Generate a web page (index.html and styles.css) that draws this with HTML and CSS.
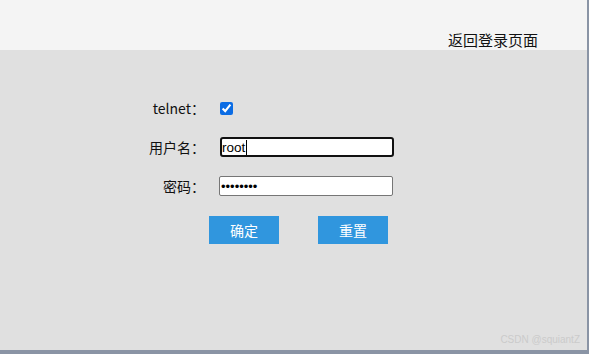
FILE: index.html
```html
<!DOCTYPE html>
<html lang="zh-CN">
<head>
<meta charset="utf-8">
<title>telnet</title>
<link rel="stylesheet" href="styles.css">
</head>
<body>
<div class="page">
  <header class="topbar">
    <a class="back-link" href="#">返回登录页面</a>
  </header>
  <main class="content">
    <form class="login-form">
      <div class="row">
        <label class="label" for="telnet">telnet：</label>
        <div class="control"><input id="telnet" class="check" type="checkbox" checked></div>
      </div>
      <div class="row">
        <label class="label" for="user">用户名：</label>
        <div class="control field-wrap">
          <input id="user" class="field field-focused" type="text" value="root">
          <span class="caret"></span>
        </div>
      </div>
      <div class="row">
        <label class="label" for="pwd">密码：</label>
        <div class="control"><input id="pwd" class="field field-pwd" type="password" value="12345678"></div>
      </div>
      <div class="buttons">
        <button type="button" class="btn">确定</button>
        <button type="reset" class="btn">重置</button>
      </div>
    </form>
    <div class="watermark">CSDN @squiantZ</div>
  </main>
</div>
</body>
</html>
```
FILE: styles.css
```css
html, body {
  margin: 0;
  padding: 0;
}
body {
  background: #8a94a5;
  width: 589px;
  height: 354px;
  overflow: hidden;
  font-family: "Noto Sans CJK SC", "Noto Sans", sans-serif;
  font-size: 14px;
  color: #111;
}
.page {
  width: 587px;
  height: 350px;
  display: flex;
  flex-direction: column;
}
.topbar {
  height: 50px;
  background: #f4f4f4;
  display: flex;
  justify-content: flex-end;
  align-items: flex-end;
  padding-right: 49px;
  box-sizing: border-box;
}
.back-link {
  color: #111;
  text-decoration: none;
  font-size: 15px;
  line-height: 20px;
}
.content {
  flex: 1;
  background: #e0e0e0;
  position: relative;
  padding-top: 48px;
  box-sizing: border-box;
}
.login-form {
  display: flex;
  flex-direction: column;
  gap: 19px;
}
.row {
  display: flex;
  align-items: center;
  height: 20px;
}
.label {
  width: 205px;
  text-align: right;
  line-height: 20px;
  color: #111;
}
.control {
  margin-left: 14px;
  display: flex;
  align-items: center;
}
.check {
  width: 13px;
  height: 13px;
  margin: 0 0 0 1px;
  accent-color: #0b6ce4;
}
.field-wrap {
  position: relative;
}
.field {
  width: 174px;
  height: 20px;
  box-sizing: border-box;
  border: 1px solid #767676;
  border-radius: 2px;
  background: #fff;
  padding: 0 1px;
  margin: 0;
  font-family: "Liberation Sans", Arial, sans-serif;
  font-size: 13.5px;
  color: #000;
  outline: none;
}
.field-focused {
  margin-left: 1px;
  width: 174px;
  border: 2px solid #111;
  border-radius: 3px;
  padding: 0;
}
.caret {
  position: absolute;
  left: 27px;
  top: 3px;
  width: 1px;
  height: 15px;
  background: #000;
}
.field-pwd {
  font-size: 13px;
}
.buttons {
  display: flex;
  gap: 39px;
  padding-left: 209px;
  margin-top: 1px;
}
.btn {
  width: 70px;
  height: 28px;
  border: none;
  background: #3096de;
  color: #fff;
  font-family: "Noto Sans CJK SC", sans-serif;
  font-size: 14px;
  padding: 0;
  margin: 0;
}
.watermark {
  position: absolute;
  right: 7px;
  bottom: 5px;
  font-family: "Liberation Sans", Arial, sans-serif;
  font-size: 10px;
  color: #cbcbcb;
}
```
